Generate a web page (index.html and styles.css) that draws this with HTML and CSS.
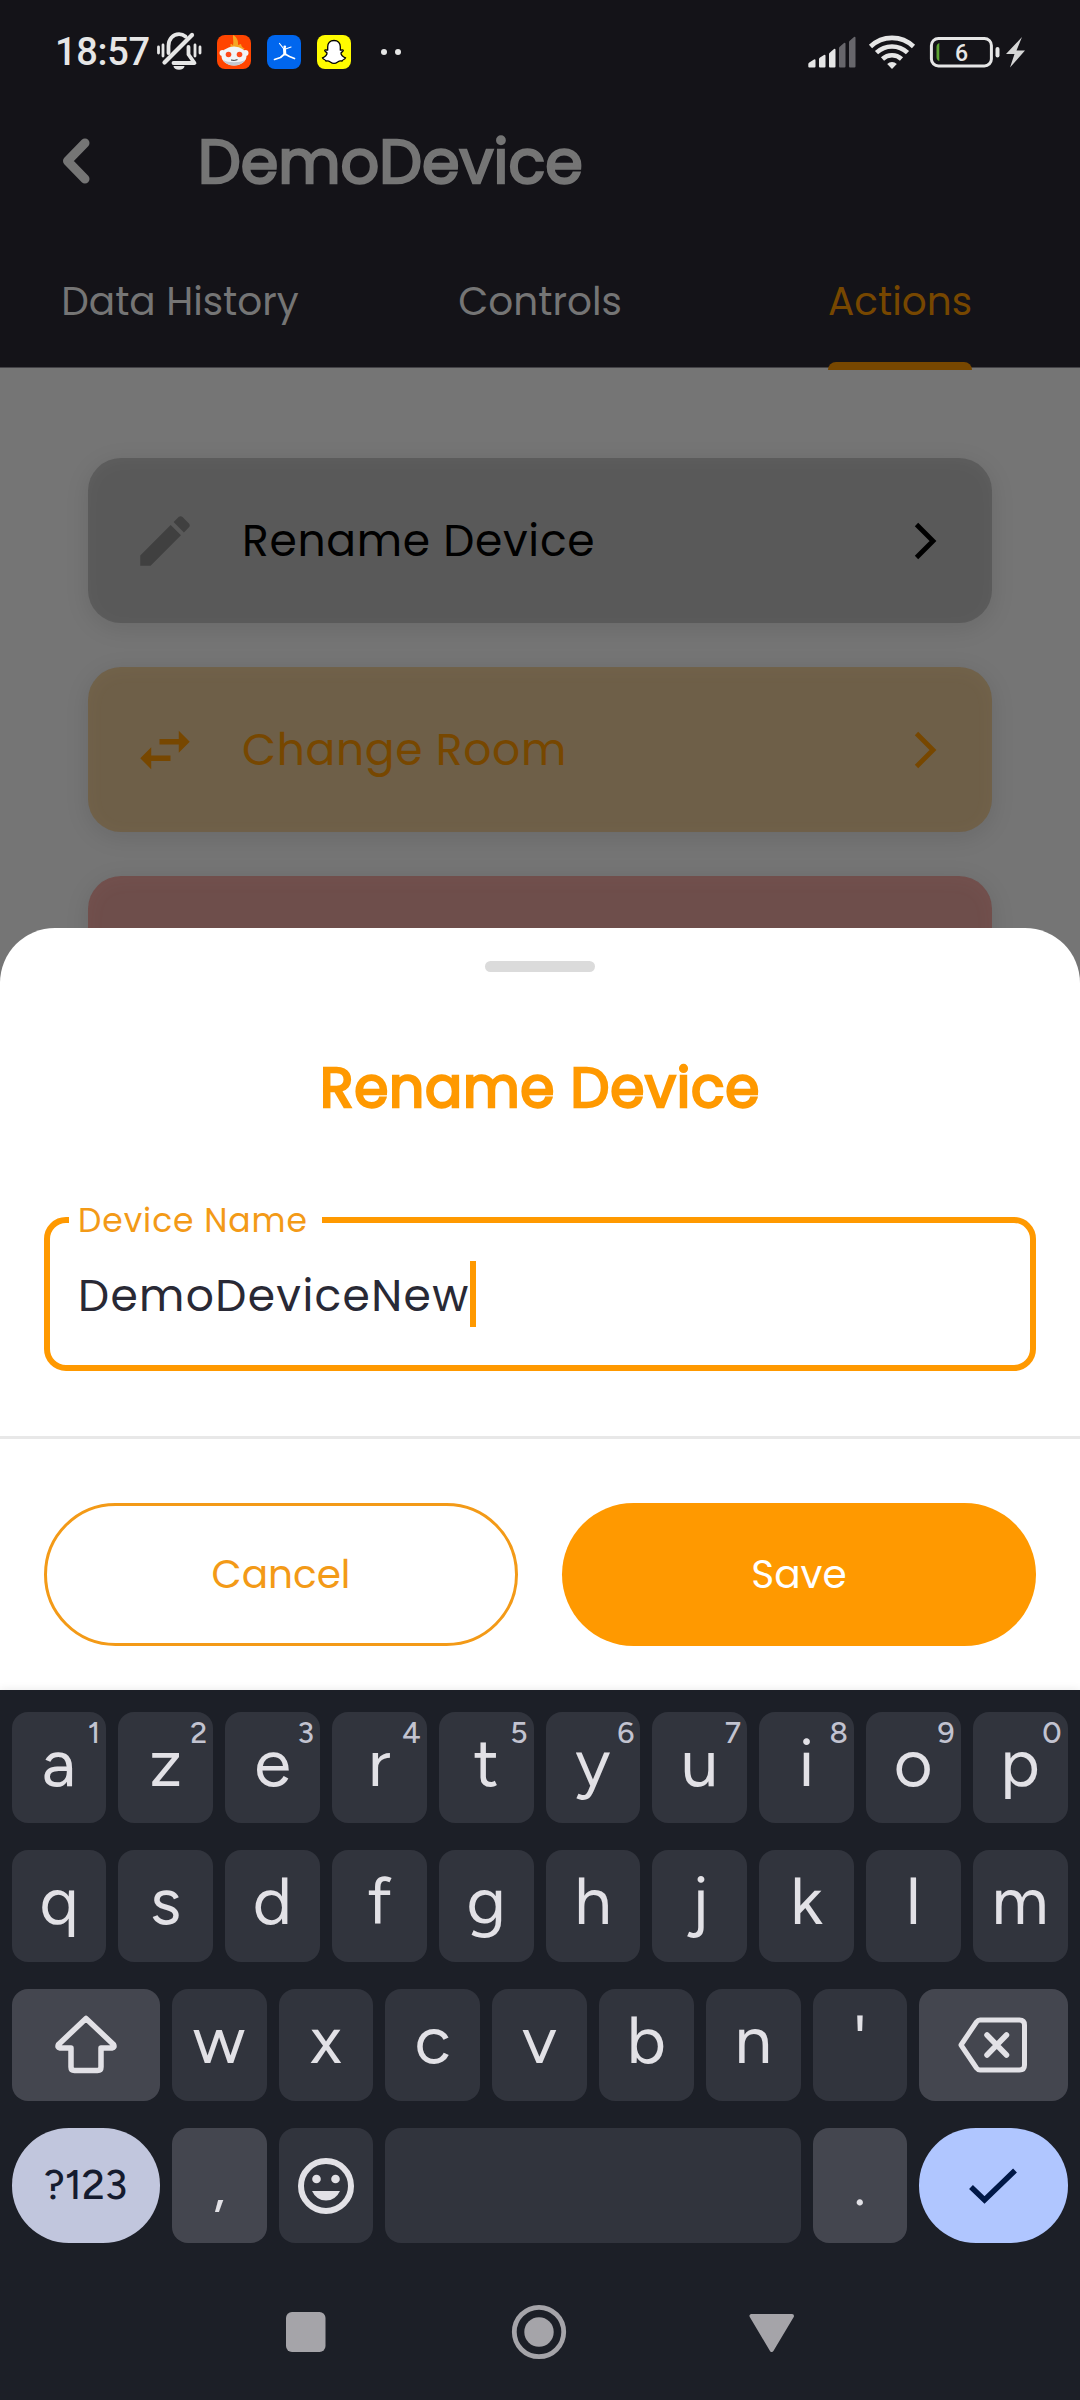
FILE: index.html
```html
<!DOCTYPE html>
<html lang="en">
<head>
<meta charset="utf-8">
<title>DemoDevice</title>
<link rel="stylesheet" href="styles.css">
</head>
<body>
<div class="screen">
  <div class="app">
    <header class="header">
      <div class="statusbar">
        <span class="time">18:57</span>
        <svg width="48" height="44" viewBox="0 0 48 44" fill="none" stroke="#e6e6e6" stroke-width="3.4" stroke-linecap="round" stroke-linejoin="round">
          <path d="M13.5 23V16C13.5 9 18 4.2 24 4.2c2.6 0 4.800 .9 6.500 2.300" stroke-width="3.800"/>
          <path d="M33.500 17v7.500l6 8.500H18.500" stroke-width="3.800"/>
          <path d="M37 5L9.500 32.500" stroke-width="4.200"/>
          <path d="M18.500 36h11a5.500 3.800 0 0 1-11 0z" fill="#e6e6e6" stroke="none"/>
          <path d="M3.500 17v6M8 15v11M40 15v11M45 17v6" stroke-width="2.800"/>
        </svg>
        <div class="apps">
          <svg width="34" height="34" viewBox="0 0 34 34">
            <rect width="34" height="34" rx="8" fill="#ff4500"/>
            <path d="M11 14c2-1 3-3 2.500-5 1.500 0 2 .7 2.500 1.500C17 6 15.500 3 16 0c4 2 5.500 6 5 10l3-1c0 2 2 4 4 5z" fill="#f5a623"/>
            <circle cx="5.500" cy="18" r="3" fill="#f4f6f8"/><circle cx="28.500" cy="18" r="3" fill="#f4f6f8"/>
            <ellipse cx="17" cy="21" rx="12.500" ry="9.500" fill="#f1f4f7"/>
            <path d="M6 25c5 3 17 3 22 0-2.500 4-6.500 5.500-11 5.500S8.500 29 6 25z" fill="#c3c9d1"/>
            <circle cx="11.500" cy="19.500" r="2.800" fill="#ff4a1c"/><circle cx="22.500" cy="19.500" r="2.800" fill="#ff4a1c"/>
            <path d="M14 25q3 1 6.500-.3" stroke="#333" stroke-width="1" fill="none"/>
          </svg>
          <svg width="34" height="34" viewBox="0 0 34 34">
            <rect width="34" height="34" rx="8" fill="#0066ee"/>
            <g stroke="#fff" fill="none" stroke-linecap="round" stroke-linejoin="round">
              <path d="M12.500 8.500l4.800 6 6.700-2.500" stroke-width="1.200"/>
              <path d="M17.500 14l.3 5" stroke-width="3"/>
              <path d="M17.500 19l-4 3.500L7.500 24.500M18 19l4.500 2.500L27.500 23.500" stroke-width="1.700"/>
            </g>
            <circle cx="17.800" cy="11.800" r="1.400" fill="#fff"/>
          </svg>
          <svg width="34" height="34" viewBox="0 0 34 34">
            <rect width="34" height="34" rx="8" fill="#fffc00"/>
            <path d="M17 5.500c4 0 6.300 2.700 6.300 6.300v3.200c1.200.3 2.700-.6 3 .5.200 1-2 1.500-2.300 2.500-.3 1.700 2 4 4.500 4.800-.2 1.800-3 1.500-3.500 3.200-2-.4-3 0-4.300 1-1.200.9-2.400 1.400-3.700 1.400s-2.500-.5-3.700-1.400c-1.300-1-2.300-1.400-4.300-1C8.500 24.300 5.700 24.600 5.500 22.800 8 22 10.300 19.700 10 18c-.3-1-2.500-1.500-2.300-2.500.3-1.100 1.800-.2 3-.5v-3.200C10.700 8.200 13 5.500 17 5.500z" fill="#fff" stroke="#000" stroke-width="1.300"/>
          </svg>
        </div>
        <svg class="dots" width="22" height="8" viewBox="0 0 22 8" fill="#e6e6e6"><circle cx="4" cy="4" r="3"/><circle cx="18" cy="4" r="3"/></svg>
        <svg class="signals" width="222" height="38" viewBox="0 0 222 38">
          <g fill="#e6e6e6">
            <path d="M.3 33.500V31q0-1 1-1.500L6 26.500q1.500-.6 1.500 1v6q0 1-1 1H1.300q-1 0-1-1z"/>
            <path d="M11 33.500V26q0-1 1-1.600l4-2.500q1.500-.6 1.500 1v10.600q0 1-1 1H12q-1 0-1-1z"/>
            <path d="M21 33.500V21q0-1 1-1.600l4-3.500q1.500-.6 1.500 1v16.600q0 1-1 1H22q-1 0-1-1z"/>
          </g>
          <g fill="#67666b">
            <path d="M31 33.500V15q0-1 1-1.600l4-3.500q1.500-.6 1.500 1v22.600q0 1-1 1H32q-1 0-1-1z"/>
            <path d="M41 33.500V9q0-1 1-1.600l4-3.500q1.500-.6 1.500 1v28.600q0 1-1 1H42q-1 0-1-1z"/>
          </g>
          <g fill="none" stroke="#e6e6e6" stroke-width="4.600">
            <path d="M62.500 13.500a31 31 0 0 1 43 0"/>
            <path d="M68.500 19.700a22.500 22.500 0 0 1 31 0"/>
            <path d="M74.500 26a14 14 0 0 1 19 0"/>
          </g>
          <path d="M84 36l-4.800-5a7 7 0 0 1 9.600 0z" fill="#e6e6e6"/>
          <rect x="123.400" y="5.400" width="60" height="27.500" rx="7" fill="none" stroke="#e6e6e6" stroke-width="3"/>
          <rect x="187.500" y="14" width="4" height="10.500" rx="2" fill="#e6e6e6"/>
          <path d="M131.300 10v18q-2.800-1-2.800-4V14q0-3 2.800-4z" fill="#5da432"/>
          <text class="level" x="153.500" y="27.500" text-anchor="middle">6</text>
          <path d="M214 4L198 21h8.500L202 34.500 217 17.500h-8.500z" fill="#d6d6d6"/>
        </svg>
      </div>
      <div class="titlebar">
        <svg width="28" height="46" viewBox="0 0 28 46" fill="none" stroke="#757575" stroke-width="9" stroke-linecap="round" stroke-linejoin="round"><path d="M23 5L5.500 23 23 41"/></svg>
        <h1 class="title">DemoDevice</h1>
      </div>
      <nav class="tabs">
        <span class="tab">Data History</span>
        <span class="tab">Controls</span>
        <span class="tab active">Actions</span>
      </nav>
    </header>
    <main class="cards">
      <div class="card gray">
        <svg width="66" height="66" viewBox="0 0 24 24" fill="#404040"><path d="M3 17.250V21h3.750L17.810 9.940l-3.750-3.750L3 17.250zM20.710 7.040c.39-.39.39-1.020 0-1.410l-2.340-2.340c-.39-.39-1.020-.39-1.410 0l-1.830 1.830 3.750 3.750 1.830-1.830z"/></svg>
        <span class="card-label">Rename Device</span>
        <svg width="23" height="38" viewBox="0 0 23 38" fill="none" stroke="currentColor" stroke-width="4.800"><path d="M2.500 2.500L19 19 2.500 35.500"/></svg>
      </div>
      <div class="card amber">
        <svg width="66" height="66" viewBox="0 0 24 24" fill="currentColor"><path d="M6.990 11L3 15l3.990 4v-3H14v-2H6.990v-3zM21 9l-3.990-4v3H10v2h7.010v3L21 9z"/></svg>
        <span class="card-label">Change Room</span>
        <svg width="23" height="38" viewBox="0 0 23 38" fill="none" stroke="currentColor" stroke-width="4.800"><path d="M2.500 2.500L19 19 2.500 35.500"/></svg>
      </div>
      <div class="card red"></div>
    </main>
  </div>

  <div class="overlay">
    <section class="sheet">
      <div class="handle"></div>
      <h2 class="sheet-title">Rename Device</h2>
      <div class="field">
        <span class="field-label">Device Name</span>
        <span class="field-value">DemoDeviceNew</span><span class="caret"></span>
      </div>
      <div class="actions">
        <div class="btn outline">Cancel</div>
        <div class="btn filled">Save</div>
      </div>
    </section>

    <section class="keyboard">
      <div class="keys">
        <div class="key">a<i>1</i></div><div class="key">z<i>2</i></div><div class="key">e<i>3</i></div><div class="key">r<i>4</i></div><div class="key">t<i>5</i></div><div class="key">y<i>6</i></div><div class="key">u<i>7</i></div><div class="key">i<i>8</i></div><div class="key">o<i>9</i></div><div class="key">p<i>0</i></div>
        <div class="key">q</div><div class="key">s</div><div class="key">d</div><div class="key">f</div><div class="key">g</div><div class="key">h</div><div class="key">j</div><div class="key">k</div><div class="key">l</div><div class="key">m</div>
        <div class="key wide special icon">
          <svg width="64" height="62" viewBox="0 0 64 62" fill="none" stroke="#e2e1e6" stroke-width="5.500" stroke-linejoin="round"><path d="M32 4.500L4.500 30.500Q3 33.500 6 34H17V53q0 3.500 3.500 3.500h23q3.500 0 3.500-3.500V34H58q3-.5 1.500-3.500z"/></svg>
        </div>
        <div class="key">w</div><div class="key">x</div><div class="key">c</div><div class="key">v</div><div class="key">b</div><div class="key">n</div><div class="key">'</div>
        <div class="key wide special icon">
          <svg width="70" height="56" viewBox="0 0 70 56" fill="none" stroke="#e2e1e6" stroke-width="5" stroke-linejoin="round"><path d="M22 3H61.500Q66.500 3 66.500 8V48q0 5-5 5H22q-2 0-3.500-2L3 28 18.500 5Q20 3 22 3z"/><path d="M29 18L48.500 38M48.500 18L29 38" stroke-width="5.500" stroke-linecap="round"/></svg>
        </div>
        <div class="key wide pill symbols">?123</div>
        <div class="key special comma">,</div>
        <div class="key icon">
          <svg width="56" height="56" viewBox="0 0 56 56"><circle cx="28" cy="28" r="25" fill="none" stroke="#e2e1e6" stroke-width="6"/><circle cx="18.500" cy="21" r="4.300" fill="#e2e1e6"/><circle cx="37.500" cy="21" r="4.300" fill="#e2e1e6"/><path d="M14 33h28q-4.500 9.500-14 9.500T14 33z" fill="#e2e1e6"/></svg>
        </div>
        <div class="key space"></div>
        <div class="key special comma">.</div>
        <div class="key wide pill enter icon">
          <svg width="50" height="38" viewBox="0 0 50 38" fill="none" stroke="#001847" stroke-width="5.500"><path d="M3 20L16.500 33 47 3.500"/></svg>
        </div>
      </div>
      <div class="navbar">
        <svg width="60" height="60" viewBox="0 0 60 60"><rect x="10" y="10" width="39.500" height="40" rx="6" fill="#a5a4a9"/></svg>
        <svg width="60" height="60" viewBox="0 0 60 60"><circle cx="30" cy="30" r="24.700" fill="none" stroke="#a5a4a9" stroke-width="4.800"/><circle cx="30" cy="30" r="14.700" fill="#a5a4a9"/></svg>
        <svg width="60" height="60" viewBox="0 0 60 60"><path d="M9.500 14h40.500L29.700 48z" fill="#a5a4a9" stroke="#a5a4a9" stroke-width="4" stroke-linejoin="round"/></svg>
      </div>
    </section>
  </div>
</div>
</body>
</html>
```
FILE: styles.css
```css
* { box-sizing: border-box; }

body {
  margin: 0;
  font-family: Poppins, Inter, sans-serif;
  background: #757575;
}

.screen {
  position: relative;
  width: 1080px;
  height: 2400px;
  overflow: hidden;
}

svg { display: block; flex: none; }

/* header */
.header {
  height: 368px;
  background: #141318;
  border-bottom: 1px solid #444347;
  display: flex;
  flex-direction: column;
}

.statusbar {
  flex: none;
  height: 104px;
  display: flex;
  align-items: center;
  padding: 0 50px 0 55px;
}

.time {
  width: 100px;
  font: 500 38px/104px Roboto, sans-serif;
  letter-spacing: -0.3px;
  color: #e6e6e6;
  white-space: nowrap;
}

.apps {
  display: flex;
  gap: 16px;
  margin-left: 14px;
}

.dots { margin-left: 29px; }

.signals { margin-left: auto; }

.level {
  font: 500 23px Roboto, sans-serif;
  fill: #e6e6e6;
}

.titlebar {
  flex: none;
  height: 114px;
  display: flex;
  align-items: center;
  padding-left: 62px;
  gap: 108px;
}

.title {
  margin: 1px 0 0;
  font-size: 60.5px;
  font-weight: 400;
  line-height: 90px;
  color: #757575;
  -webkit-text-stroke: 2.4px #757575;
}

.tabs {
  flex: none;
  height: 152px;
  display: grid;
  grid-template-columns: repeat(3, 1fr);
  justify-items: center;
  font-size: 39px;
  line-height: 60px;
  color: #757575;
}

.tab {
  position: relative;
  height: 152px;
  padding-top: 54px;
}

.tab.active { color: #774700; }

.tab.active::after {
  content: "";
  position: absolute;
  left: 0;
  right: 0;
  bottom: 0;
  height: 8px;
  border-radius: 8px 8px 0 0;
  background: #774700;
}

/* action cards */
.cards {
  padding: 90px 88px 0;
  display: flex;
  flex-direction: column;
  gap: 44px;
}

.card {
  height: 165px;
  border-radius: 33px;
  display: flex;
  align-items: center;
  padding: 0 55px 0 44px;
  font-size: 44px;
  letter-spacing: 0.7px;
}

.card-label {
  flex: 1;
  margin-left: 44px;
}

.gray {
  background: #595959;
  color: #000;
  box-shadow: 0 5px 24px rgba(0, 0, 0, 0.1), inset 0 3px 20px rgba(255, 255, 255, 0.04);
}

.amber {
  background: #6e5f48;
  color: #774700;
  box-shadow: 0 5px 24px rgba(0, 0, 0, 0.1), inset 0 3px 20px rgba(255, 220, 180, 0.04);
}

.red {
  background: #6e4e4b;
  box-shadow: 0 5px 24px rgba(0, 0, 0, 0.1), inset 0 3px 20px rgba(255, 160, 150, 0.05);
}

/* bottom sheet */
.overlay {
  position: absolute;
  inset: 0;
  display: flex;
  flex-direction: column;
  justify-content: flex-end;
}

.sheet {
  height: 762px;
  background: #fff;
  border-radius: 55px 55px 0 0;
  display: flex;
  flex-direction: column;
  align-items: center;
}

.handle {
  width: 110px;
  height: 11px;
  margin-top: 33px;
  border-radius: 6px;
  background: #dbdbdb;
}

.sheet-title {
  margin: 75px 0 89px;
  font-size: 55px;
  font-weight: 400;
  line-height: 81px;
  letter-spacing: 0.75px;
  color: #ff9900;
  -webkit-text-stroke: 2.4px #ff9900;
}

.field {
  position: relative;
  width: 992px;
  height: 154px;
  border: 6px solid #ff9900;
  border-radius: 22px;
  display: flex;
  align-items: center;
  padding: 3px 0 0 28px;
}

.field-label {
  position: absolute;
  left: 19px;
  top: -23px;
  width: 253px;
  padding-left: 9px;
  background: #fff;
  font-size: 33px;
  line-height: 41px;
  letter-spacing: 0.930px;
  color: #f39a17;
}

.field-value {
  font-size: 44px;
  line-height: 66px;
  letter-spacing: 1.350px;
  color: #292935;
}

.caret {
  width: 6px;
  height: 66px;
  margin-bottom: 3px;
  background: #ff9900;
}

.actions {
  width: 100%;
  margin-top: 65px;
  padding: 64px 44px 0;
  border-top: 3px solid #e8e8e8;
  display: grid;
  grid-template-columns: 1fr 1fr;
  gap: 44px;
}

.btn {
  height: 143px;
  border-radius: 72px;
  font-size: 39px;
  display: flex;
  align-items: center;
  justify-content: center;
}

.outline {
  border: 3px solid #f39a17;
  color: #f39a17;
}

.filled {
  background: #ff9900;
  color: #fff;
}

/* keyboard */
.keyboard {
  height: 710px;
  padding: 22px 12.5px 0 11.5px;
  background: #1c1f27;
  box-shadow: 0 -1px 8px rgba(0, 0, 0, 0.08);
}

.keys {
  display: grid;
  grid-template-columns: repeat(20, 1fr);
  grid-template-rows: 111px 112px 112px 115px;
  gap: 27px 12px;
}

.key {
  position: relative;
  grid-column: span 2;
  border-radius: 16px;
  background: #31343d;
  color: #e2e1e6;
  font: 450 67px/101px Figtree, Inter, sans-serif;
  text-align: center;
}

.key i {
  position: absolute;
  top: 9px;
  right: 6px;
  font: 550 30px/24px Figtree, Inter, sans-serif;
  color: #c2c3d0;
}

.wide { grid-column: span 3; }
.space { grid-column: span 8; }
.special { background: #44464f; }

.icon {
  display: flex;
  align-items: center;
  justify-content: center;
}

.comma {
  font-size: 56px;
  line-height: 116px;
}

.pill { border-radius: 57px; }

.symbols {
  background: #c1c6dd;
  color: #151b2e;
  font-size: 41px;
  font-weight: 500;
  line-height: 113px;
}

.enter { background: #b0c6ff; }

/* system navigation */
.navbar {
  display: flex;
  justify-content: center;
  gap: 173px;
  margin: 59px 1px 0 0;
}
```
